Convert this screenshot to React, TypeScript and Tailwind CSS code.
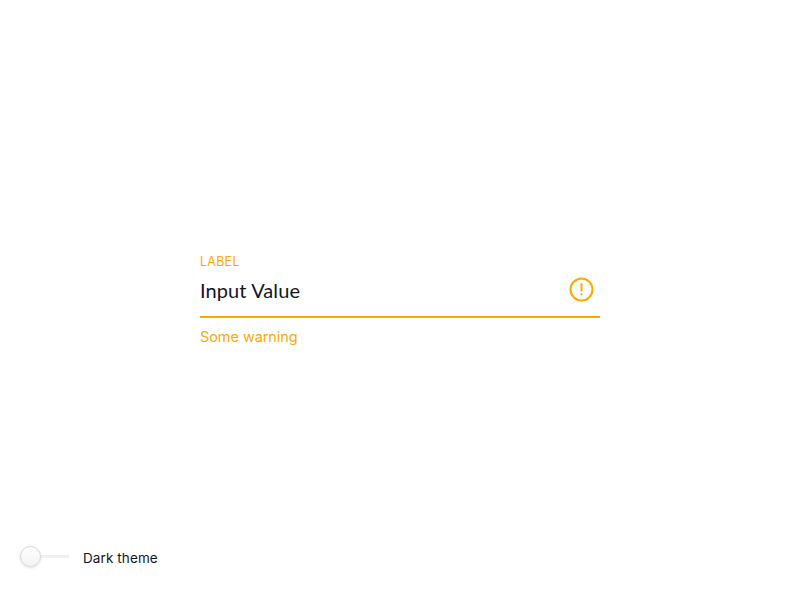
export default function App() {
  return (
    <div className="flex h-[600px] w-[800px] flex-col bg-white font-['Inter',sans-serif] text-[#14141f] antialiased">
      <div className="mx-auto mt-[253px] w-[400px] text-[#ffa900]">
        <div className="h-4 pt-px text-[12.5px] leading-4 tracking-[0.25px]">LABEL</div>
        <div className="flex h-[49px] items-start justify-between border-b-2 border-[#ffa900]">
          <input
            defaultValue="Input Value"
            aria-label="Label"
            className="mt-[7px] h-7 w-[300px] bg-transparent font-['Lato',sans-serif] text-[20px] leading-7 tracking-[0.1px] text-[#14141f] outline-none"
          />
          <svg className="mt-2 mr-[6px] h-[25px] w-[25px]" viewBox="0 0 25 25" fill="none" stroke="currentColor" strokeWidth="2">
            <circle cx="12.5" cy="12.5" r="11" />
            <path d="M12.5 7v6.5" strokeLinecap="round" />
            <circle cx="12.5" cy="17.3" r="1.1" fill="currentColor" stroke="none" />
          </svg>
        </div>
        <div className="mt-[9px] h-5 text-[14.5px] leading-5 tracking-[-0.07px]">Some warning</div>
      </div>
      <label className="mt-auto mb-[30px] ml-5 flex h-6 items-center text-[13.5px] leading-6 tracking-[0.1px]">
        <span className="mb-[3px] flex h-[22px] w-[49px] items-center bg-[linear-gradient(#f0f0f0,#f0f0f0)] bg-[length:100%_3px] bg-center bg-no-repeat">
          <span className="h-[21px] w-[21px] rounded-full border border-[#d8d8d8] bg-gradient-to-b from-white to-[#f3f3f3] shadow-sm" />
        </span>
        <span className="ml-[14px]">Dark theme</span>
      </label>
    </div>
  );
}
